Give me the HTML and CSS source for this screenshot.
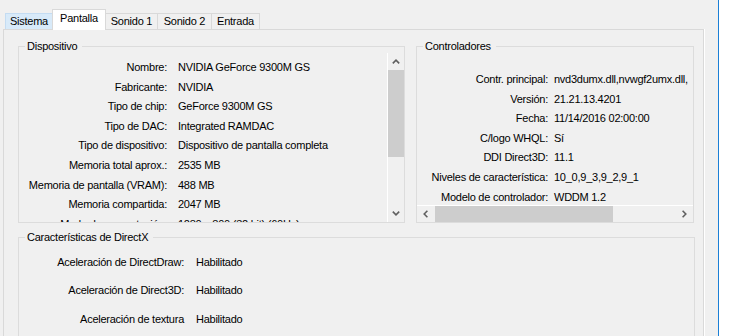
FILE: index.html
```html
<!DOCTYPE html>
<html lang="es">
<head>
    <meta charset="UTF-8">
    <meta name="viewport" content="width=device-width, initial-scale=1.0">
    <title>Herramienta de diagnóstico de DirectX</title>
    <link rel="stylesheet" href="styles.css">
</head>
<body>
    <div class="screen">
        <div class="dialog">
            <div class="tabs">
                <div class="tab tab-sistema tab-hover">Sistema</div>
                <div class="tab tab-pantalla tab-active">Pantalla</div>
                <div class="tab tab-sonido1">Sonido 1</div>
                <div class="tab tab-sonido2">Sonido 2</div>
                <div class="tab tab-entrada">Entrada</div>
            </div>
            <div class="page">
                <div class="top-row">
                    <fieldset class="group group-device">
                        <legend>Dispositivo</legend>
                        <div class="list">
                            <div class="rows rows-device">
                                <div class="row"><span class="label">Nombre:</span><span class="value">NVIDIA GeForce 9300M GS</span></div>
                                <div class="row"><span class="label">Fabricante:</span><span class="value">NVIDIA</span></div>
                                <div class="row"><span class="label">Tipo de chip:</span><span class="value">GeForce 9300M GS</span></div>
                                <div class="row"><span class="label">Tipo de DAC:</span><span class="value">Integrated RAMDAC</span></div>
                                <div class="row"><span class="label">Tipo de dispositivo:</span><span class="value">Dispositivo de pantalla completa</span></div>
                                <div class="row"><span class="label">Memoria total aprox.:</span><span class="value">2535 MB</span></div>
                                <div class="row"><span class="label">Memoria de pantalla (VRAM):</span><span class="value">488 MB</span></div>
                                <div class="row"><span class="label">Memoria compartida:</span><span class="value">2047 MB</span></div>
                                <div class="row"><span class="label">Modo de presentación:</span><span class="value">1280 x 800 (32 bit) (60Hz)</span></div>
                            </div>
                            <div class="vscroll">
                                <div class="sb-btn">
                                    <svg width="8" height="5" viewBox="0 0 8 5"><path d="M0.8 4.4 L4 1.2 L7.2 4.4" fill="none" stroke="#606060" stroke-width="1.6"/></svg>
                                </div>
                                <div class="thumb-v"></div>
                                <div class="sb-track"></div>
                                <div class="sb-btn">
                                    <svg width="8" height="5" viewBox="0 0 8 5"><path d="M0.8 0.6 L4 3.8 L7.2 0.6" fill="none" stroke="#606060" stroke-width="1.6"/></svg>
                                </div>
                            </div>
                        </div>
                    </fieldset>
                    <fieldset class="group group-drivers">
                        <legend>Controladores</legend>
                        <div class="list list-col">
                            <div class="rows rows-drivers">
                                <div class="row"><span class="label">Contr. principal:</span><span class="value">nvd3dumx.dll,nvwgf2umx.dll,</span></div>
                                <div class="row"><span class="label">Versión:</span><span class="value">21.21.13.4201</span></div>
                                <div class="row"><span class="label">Fecha:</span><span class="value">11/14/2016 02:00:00</span></div>
                                <div class="row"><span class="label">C/logo WHQL:</span><span class="value">Sí</span></div>
                                <div class="row"><span class="label">DDI Direct3D:</span><span class="value">11.1</span></div>
                                <div class="row"><span class="label">Niveles de característica:</span><span class="value">10_0,9_3,9_2,9_1</span></div>
                                <div class="row"><span class="label">Modelo de controlador:</span><span class="value">WDDM 1.2</span></div>
                            </div>
                            <div class="hscroll">
                                <div class="sb-btn">
                                    <svg width="5" height="8" viewBox="0 0 5 8"><path d="M4.4 0.8 L1.2 4 L4.4 7.2" fill="none" stroke="#606060" stroke-width="1.6"/></svg>
                                </div>
                                <div class="thumb-h"></div>
                                <div class="sb-track"></div>
                                <div class="sb-btn">
                                    <svg width="5" height="8" viewBox="0 0 5 8"><path d="M0.6 0.8 L3.8 4 L0.6 7.2" fill="none" stroke="#606060" stroke-width="1.6"/></svg>
                                </div>
                            </div>
                        </div>
                    </fieldset>
                </div>
                <fieldset class="group group-dx">
                    <legend>Características de DirectX</legend>
                    <div class="rows rows-dx">
                        <div class="row"><span class="label">Aceleración de DirectDraw:</span><span class="value">Habilitado</span></div>
                        <div class="row"><span class="label">Aceleración de Direct3D:</span><span class="value">Habilitado</span></div>
                        <div class="row"><span class="label">Aceleración de textura</span><span class="value">Habilitado</span></div>
                    </div>
                </fieldset>
            </div>
        </div>
        <div class="edge"></div>
    </div>
</body>
</html>
```

FILE: styles.css
```css
body {
    margin: 0;
    background-color: #f0f0f0;
    font-family: "Liberation Sans", Arial, sans-serif;
    font-size: 11px;
    letter-spacing: -0.25px;
    color: #000;
    overflow: hidden;
}
.screen {
    display: flex;
    height: 336px;
    overflow: hidden;
}
.dialog {
    width: 718px;
    height: 336px;
    padding-top: 9px;
    box-sizing: border-box;
    overflow: hidden;
}
.edge {
    flex: 1;
    border-left: 1px solid #1a7fd6;
    background: #fff;
}

/* pestañas */
.tabs {
    display: flex;
    align-items: flex-end;
    height: 20px;
    padding-left: 5px;
}
.tab {
    box-sizing: border-box;
    height: 16px;
    line-height: 14px;
    border: 1px solid #d9d9d9;
    border-bottom: none;
    margin-left: -1px;
    text-align: center;
    background: #f0f0f0;
}
.tab-sistema { width: 48px; margin-left: 0; }
.tab-pantalla { width: 54px; }
.tab-sonido1 { width: 53px; }
.tab-sonido2 { width: 55px; }
.tab-entrada { width: 49px; }
.tab-hover {
    background: #d8eaf9;
    border-color: #c4dcf2;
}
.tab-active {
    position: relative;
    z-index: 1;
    height: 21px;
    line-height: 17px;
    margin-bottom: -1px;
    background: #fff;
}

/* página */
.page {
    margin-left: 3px;
    width: 701px;
    height: 307px;
    box-sizing: border-box;
    border: 1px solid #d9d9d9;
    border-bottom: none;
    box-shadow: 1px 0 0 #fff;
    padding: 9px 8px 0 14px;
    overflow: hidden;
}
.top-row {
    display: flex;
    gap: 11px;
}
.group {
    margin: 0;
    padding: 0;
    min-width: 0;
    box-sizing: border-box;
    border: 1px solid #dcdcdc;
}
.group legend {
    margin-left: 6px;
    padding: 0 5px 0 2px;
    line-height: 14px;
}
.group-device {
    width: 387px;
    height: 184px;
}
.group-drivers {
    width: 278px;
    height: 184px;
}
.group-dx {
    margin-top: 7px;
    width: 677px;
    height: 106px;
    border-bottom: none;
}

/* filas */
.list {
    display: flex;
    height: 169px;
}
.list-col {
    flex-direction: column;
}
.rows {
    flex: 1;
    overflow: hidden;
}
.row {
    display: flex;
    height: 19.6px;
    line-height: 19.6px;
    white-space: nowrap;
}
.label {
    flex: none;
    text-align: right;
}
.rows-device { padding-top: 5px; }
.rows-device .label { width: 148px; }
.rows-device .value { margin-left: 11px; }

.rows-drivers { padding-top: 17px; }
.rows-drivers .label { width: 131px; }
.rows-drivers .value { margin-left: 6px; }

.rows-dx { padding-top: 3.5px; }
.rows-dx .row { height: 28.8px; line-height: 28.8px; }
.rows-dx .label { width: 165px; }
.rows-dx .value { margin-left: 12px; }

/* barras de desplazamiento */
.vscroll {
    width: 16px;
    border-left: 1px solid #fff;
    display: flex;
    flex-direction: column;
}
.hscroll {
    height: 16px;
    border-top: 1px solid #fff;
    display: flex;
}
.sb-btn {
    flex: none;
    width: 16px;
    height: 17px;
    display: flex;
    align-items: center;
    justify-content: center;
}
.hscroll .sb-btn {
    width: 17px;
    height: 16px;
}
.sb-track {
    flex: 1;
}
.thumb-v {
    height: 87px;
    background: #cdcdcd;
}
.thumb-h {
    width: 178px;
    margin-left: 1px;
    background: #cdcdcd;
}
```
